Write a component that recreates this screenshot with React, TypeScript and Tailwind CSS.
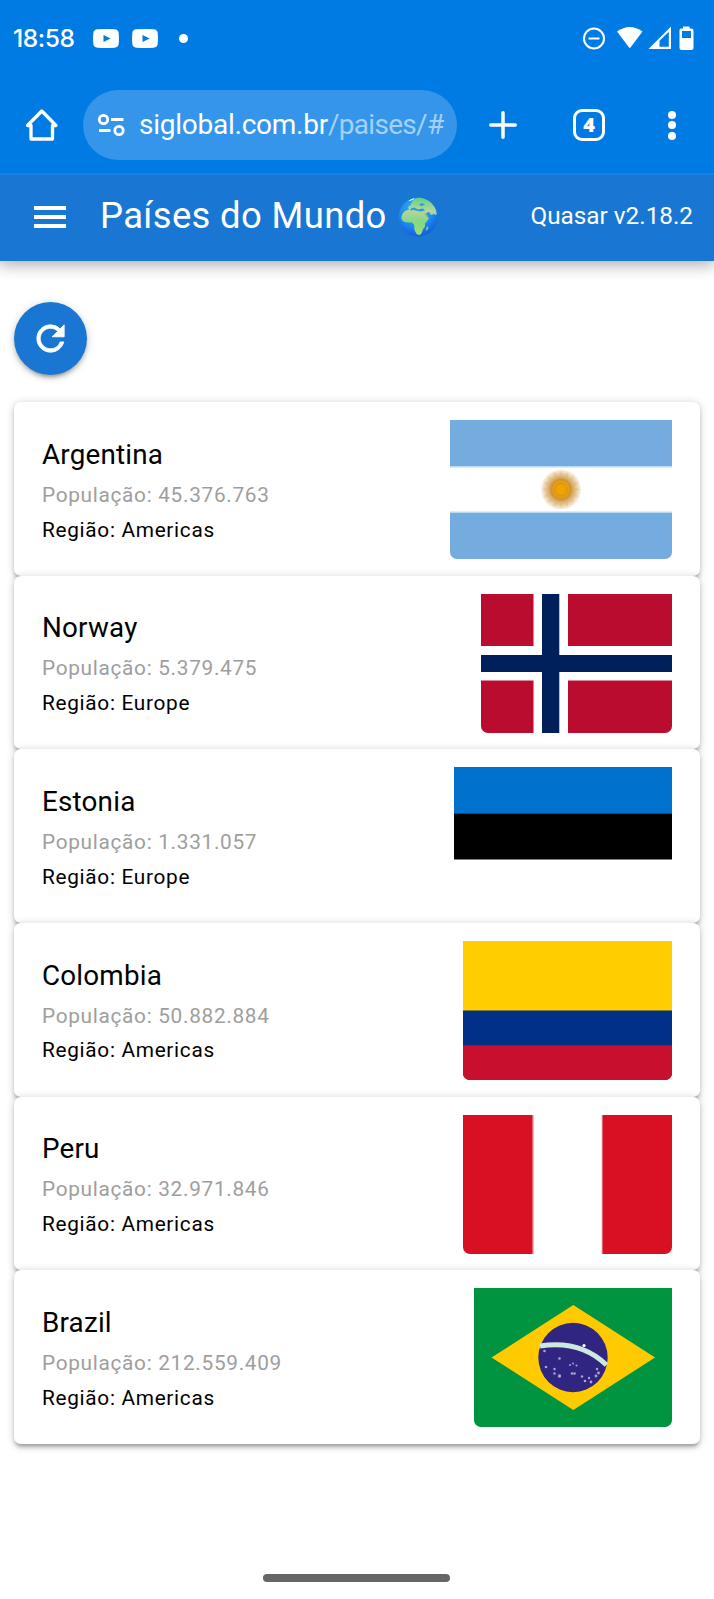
import React from "react";

type Country = { name: string; population: string; region: string; flag: React.ReactNode };

function Sun() {
  const rays = Array.from({ length: 16 }, (_, i) => i * 22.5);
  return (
    <g>
      <defs>
        <radialGradient id="sun">
          <stop offset="0" stopColor="#f0a500" />
          <stop offset=".36" stopColor="#e9a00c" />
          <stop offset=".5" stopColor="#cf9437" />
          <stop offset=".66" stopColor="#deb67c" />
          <stop offset=".85" stopColor="#eed9b8" />
          <stop offset="1" stopColor="#fbf4ea" />
        </radialGradient>
      </defs>
      <circle cx="111" cy="69.5" r="20" fill="url(#sun)" />
      {rays.map((a) => (
        <path key={a} d="M108.6 58L111 50.3L113.4 58Z" fill="#dfb574" opacity=".4" transform={`rotate(${a} 111 69.5)`} />
      ))}
      <circle cx="111" cy="69.5" r="6.200" fill="none" stroke="#d98c0c" strokeWidth="1" opacity=".8" />
    </g>
  );
}

const countries: Country[] = [
  {
    name: "Argentina",
    population: "45.376.763",
    region: "Americas",
    flag: (
      <svg viewBox="0 0 222 139" preserveAspectRatio="none" className="block h-[139px] w-[222px] rounded-b-[7px]">
        <rect width="222" height="139" fill="#74acdf" />
        <rect y="46" width="222" height="47" fill="#badaf0" />
        <rect y="47.5" width="222" height="44" fill="#fff" />
        <Sun />
      </svg>
    ),
  },
  {
    name: "Norway",
    population: "5.379.475",
    region: "Europe",
    flag: (
      <svg viewBox="0 0 191 139" preserveAspectRatio="none" className="block h-[139px] w-[191px] rounded-b-[7px]">
        <rect width="191" height="139" fill="#ba0c2f" />
        <path d="M52.5 0H87V139H52.5ZM0 52H191V86.5H0Z" fill="#fff" />
        <path d="M61 0H78.3V139H61ZM0 61H191V78H0Z" fill="#00205b" />
      </svg>
    ),
  },
  {
    name: "Estonia",
    population: "1.331.057",
    region: "Europe",
    flag: (
      <svg viewBox="0 0 218 139" preserveAspectRatio="none" className="block h-[139px] w-[218px] rounded-b-[7px]">
        <rect width="218" height="46.3" fill="#0072ce" />
        <rect y="46.3" width="218" height="46.2" fill="#000" />
      </svg>
    ),
  },
  {
    name: "Colombia",
    population: "50.882.884",
    region: "Americas",
    flag: (
      <svg viewBox="0 0 209 139" preserveAspectRatio="none" className="block h-[139px] w-[209px] rounded-b-[7px]">
        <rect width="209" height="139" fill="#ffcd00" />
        <rect y="69.5" width="209" height="69.5" fill="#003087" />
        <rect y="104.3" width="209" height="34.7" fill="#c8102e" />
      </svg>
    ),
  },
  {
    name: "Peru",
    population: "32.971.846",
    region: "Americas",
    flag: (
      <svg viewBox="0 0 209 139" preserveAspectRatio="none" className="block h-[139px] w-[209px] rounded-b-[7px]">
        <rect width="209" height="139" fill="#d91023" />
        <rect x="69.5" width="70" height="139" fill="#f5b8bd" />
        <rect x="71" width="67.500" height="139" fill="#fff" />
      </svg>
    ),
  },
  {
    name: "Brazil",
    population: "212.559.409",
    region: "Americas",
    flag: (
      <svg viewBox="0 0 198 139" preserveAspectRatio="none" className="block h-[139px] w-[198px] rounded-b-[7px]">
        <rect width="198" height="139" fill="#009440" />
        <path d="M17.5 69.5L99.3 17L181 69.5L99.3 122Z" fill="#ffcb00" />
        <circle cx="99" cy="69.5" r="34.7" fill="#302681" />
        <path d="M66 58C92 54 115 60 132.5 77" fill="none" stroke="#cbe9df" strokeWidth="5" />
        <g fill="#aaa4d2">
          <circle cx="70.5" cy="63" r="1.3" /><circle cx="85.5" cy="70.5" r="1.3" /><circle cx="72" cy="79" r="1.3" />
          <circle cx="80.5" cy="81" r="1.2" /><circle cx="80.5" cy="85.5" r="1.2" /><circle cx="85.5" cy="88" r="1.7" />
          <circle cx="96" cy="77" r="1" /><circle cx="99" cy="75.500" r="1" /><circle cx="102.500" cy="77.500" r="1" /><circle cx="98" cy="85.5" r="1.3" /><circle cx="100.500" cy="85.5" r="1.3" />
          <circle cx="108" cy="88.5" r="1.2" /><circle cx="111" cy="93" r="1.3" /><circle cx="115" cy="90" r="1.2" />
          <circle cx="117" cy="94" r="1.4" /><circle cx="122" cy="88" r="1.4" /><circle cx="124.5" cy="85" r="1.4" />
          <circle cx="123" cy="81" r="1.2" /><circle cx="110" cy="57.5" r="1.6" fill="#fff" />
        </g>
      </svg>
    ),
  },
];

function YouTubeBadge() {
  return (
    <svg viewBox="0 0 26 19" className="h-[19px] w-[26px]">
      <path fillRule="evenodd" fill="#fff" d="M4.500 0.300Q13-.3 21.500 .3Q25.500 .6 25.700 4.200Q26.200 9.500 25.700 14.800Q25.500 18.400 21.500 18.700Q13 19.300 4.500 18.700Q.5 18.400 .3 14.800Q-.2 9.500 .3 4.200Q.5 .6 4.500 .3ZM10.500 6.100V12.900L17.600 9.500Z" />
    </svg>
  );
}

function Globe() {
  return (
    <svg viewBox="0 0 40 40" className="h-10 w-10">
      <defs>
        <radialGradient id="sea" cx=".45" cy=".3" r=".75">
          <stop offset="0" stopColor="#35b5f5" />
          <stop offset=".6" stopColor="#1b88ee" />
          <stop offset="1" stopColor="#1353dd" />
        </radialGradient>
        <linearGradient id="land" x1="0" y1="0" x2="0" y2="1">
          <stop offset="0" stopColor="#62d089" />
          <stop offset=".35" stopColor="#b5d69a" />
          <stop offset=".65" stopColor="#83d883" />
          <stop offset="1" stopColor="#9edf78" />
        </linearGradient>
        <clipPath id="globeClip"><circle cx="20" cy="20" r="19.500" /></clipPath>
      </defs>
      <circle cx="20" cy="20" r="19.500" fill="url(#sea)" />
      <g clipPath="url(#globeClip)">
        <path fill="url(#land)" d="M15 3Q19 0 24 1Q32 3 36 9Q39 13 38.500 18L36 17L33 18L31 15L28 16L31 21Q29.500 24 27 26.500Q27.500 30 25 32Q24 37 21.500 38Q18.500 38 17.500 35Q15.500 31 16.500 29Q16 27 14 25.500L10 25.500Q5 25.500 3.500 22Q3 17 7 14L11 12.500L10 10Q13 8 13 7Z" />
        <path fill="#249ed9" d="M13 11.500L16.500 10.500L20 12.500L25 11.500L27 13.500L22 14.500L16 13L12 13.500ZM21 7.500L24 6L27 8L23 9Z" />
        <path d="M27 16.500L31.500 21.500" stroke="#5a97a8" strokeWidth="1" />
        <path fill="#7bd584" d="M28 31.500L30 29L30.500 31L28.500 34Z" />
        <path fill="#e7f8fb" d="M10.500 3.500L16 1V2.200L12 4Z" />
      </g>
    </svg>
  );
}

function StatusBar() {
  return (
    <div className="flex h-[76px] items-center pl-[13px] pr-[20px]">
      <span className="w-[80px] font-[Inter] text-[24.500px] font-medium leading-none tracking-[-0.400px]">18:58</span>
      <div className="flex items-center gap-[13px]">
        <YouTubeBadge />
        <YouTubeBadge />
      </div>
      <span className="ml-[21px] size-[9px] rounded-full bg-white" />
      <svg viewBox="0 0 112 26" className="ml-auto h-[26px] w-[112px]" fill="#fff">
        <circle cx="12" cy="13.500" r="10" fill="none" stroke="#fff" strokeWidth="2" />
        <path d="M6.500 12.500H17.500V14.500H6.500Z" />
        <path d="M35 6.500Q47.800 -2.500 60.500 6.500L48.500 22.500Q47.800 23.300 47.100 22.500Z" />
        <path fillRule="evenodd" d="M66.500 24L89 1.500V24ZM77.500 15.800V21.800H86.800V6.800Z" />
        <path fillRule="evenodd" d="M99 3.500H101V1.500H107.500V3.500H109.500Q111.500 3.500 111.500 5.500V23Q111.500 25 109.500 25H99.500Q97.500 25 97.500 23V5.500Q97.500 3.500 99 3.500ZM100 6V13H109V6Z" />
      </svg>
    </div>
  );
}

function BrowserBar() {
  return (
    <div className="flex h-[97px] items-start pt-[14px]">
      <svg viewBox="0 0 34 34" className="ml-[25px] mt-[18px] size-[34px]" fill="none" stroke="#fff" strokeWidth="3.300" strokeLinejoin="round" strokeLinecap="round">
        <path d="M2.500 17.500L16.800 3L31 17.500H27.500V31H6V17.500Z" />
      </svg>
      <div className="ml-[24px] flex h-[70px] w-[374px] items-center rounded-full bg-[#3595ea] pl-[14px]">
        <svg viewBox="0 0 28 24" className="h-6 w-7" fill="none" stroke="#fff" strokeWidth="2.800">
          <circle cx="6.500" cy="6.500" r="4.200" />
          <path d="M14 6.500H26.500M2 17.500H13.500" />
          <circle cx="22" cy="17.500" r="4.200" />
        </svg>
        <span className="ml-[14px] whitespace-nowrap font-[Roboto] text-[28px] leading-[70px] tracking-[-0.250px]">
          siglobal.com.br<span className="tracking-[-0.700px] text-[#a5d1f7]">/paises/#</span>
        </span>
      </div>
      <svg viewBox="0 0 28 28" className="ml-[32px] mt-[21px] size-7" stroke="#fff" strokeWidth="3.500" strokeLinecap="round">
        <path d="M14 1.800V26.200M1.800 14H26.200" />
      </svg>
      <div className="ml-[56px] mt-[19px] flex size-8 items-center justify-center rounded-[9px] border-[3.500px] border-white font-['Open_Sans'] text-[20px] font-extrabold leading-none">4</div>
      <div className="ml-[63px] mt-[20.500px] flex flex-col gap-[2.500px]">
        <span className="size-[8px] rounded-full bg-white" />
        <span className="size-[8px] rounded-full bg-white" />
        <span className="size-[8px] rounded-full bg-white" />
      </div>
    </div>
  );
}

function AppHeader() {
  return (
    <header className="flex h-[88px] items-center border-t-2 border-[#1c80de] bg-[#1976d2] pb-[3px] pl-[34px] pr-[21px] shadow-[0_0_17px_3px_rgba(0,0,0,0.2),0_0_17px_rgba(0,0,0,0.24)]">
      <div className="flex w-8 flex-col gap-[5px]">
        <span className="h-[4px] bg-white" />
        <span className="h-[4px] bg-white" />
        <span className="h-[4px] bg-white" />
      </div>
      <h1 className="ml-[34px] text-[36.450px] leading-none tracking-[0.360px]">Países do Mundo</h1>
      <div className="ml-[11px]"><Globe /></div>
      <span className="ml-auto text-[24.300px] leading-none">Quasar v2.18.2</span>
    </header>
  );
}

function CountryCard({ country }: { country: Country }) {
  return (
    <article className="flex h-[173.600px] justify-between rounded-[7px] bg-white pl-[28px] pr-[27.700px] pt-[18px] shadow-[0_1.700px_8.700px_rgba(0,0,0,0.2),0_3.500px_3.500px_rgba(0,0,0,0.14),0_5.200px_1.700px_-3.500px_rgba(0,0,0,0.12)]">
      <div className="pt-[10.500px]">
        <h2 className="text-[27.800px] leading-[48.600px] tracking-[0.200px] text-black">{country.name}</h2>
        <p className="-mt-[1.500px] text-[20.800px] leading-[34.700px] tracking-[0.690px] text-[#9e9e9e]">População: {country.population}</p>
        <p className="text-[20.800px] leading-[34.700px] tracking-[0.690px] text-black">Região: {country.region}</p>
      </div>
      {country.flag}
    </article>
  );
}

export default function App() {
  return (
    <div className="flex h-[1599px] w-[714px] flex-col overflow-hidden bg-white font-[Roboto,sans-serif] text-white">
      <div className="z-10 bg-[#007be4]">
        <StatusBar />
        <BrowserBar />
      </div>
      <AppHeader />
      <main className="flex flex-1 flex-col px-[14px] pt-[41px]">
        <button className="flex size-[73px] items-center justify-center rounded-full bg-[#1976d2] shadow-[0_1.700px_8.700px_rgba(0,0,0,0.2),0_3.500px_3.500px_rgba(0,0,0,0.14),0_5.200px_1.700px_-3.500px_rgba(0,0,0,0.12)]">
          <svg viewBox="0 0 24 24" className="size-[41px]" fill="#fff" stroke="#fff" strokeWidth=".5">
            <path d="M17.650 6.350A7.958 7.958 0 0 0 12 4c-4.420 0-7.990 3.580-7.990 8s3.570 8 7.990 8c3.730 0 6.840-2.550 7.730-6h-2.080A5.990 5.990 0 0 1 12 18c-3.310 0-6-2.690-6-6s2.690-6 6-6c1.660 0 3.140.69 4.220 1.780L13 11h7V4l-2.350 2.350z" />
          </svg>
        </button>
        <section className="mt-[27.300px] flex flex-col">
          {countries.map((c) => <CountryCard key={c.name} country={c} />)}
        </section>
        <div className="mb-[17px] mr-[1px] mt-auto h-2 w-[187px] self-center rounded-full bg-[#666]" />
      </main>
    </div>
  );
}
